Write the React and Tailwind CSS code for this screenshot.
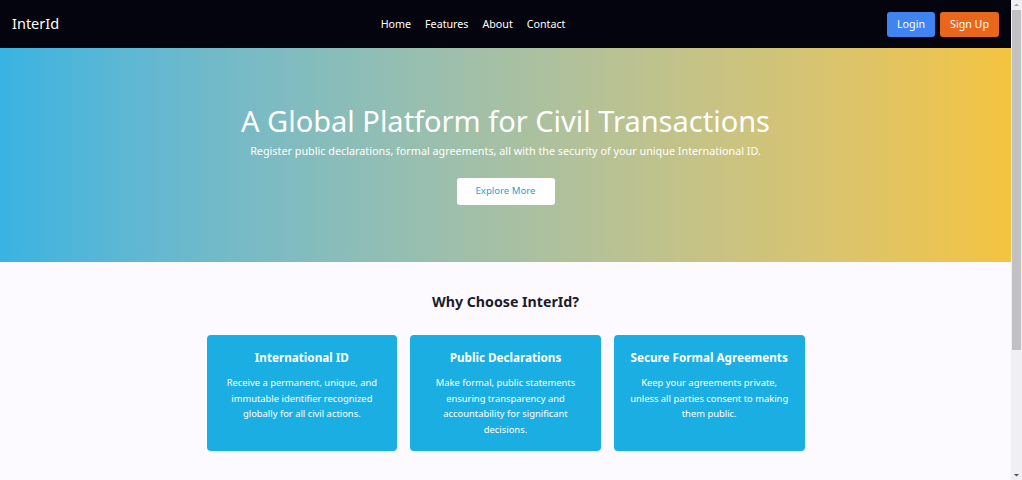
import React from "react";

const features = [
  {
    title: "International ID",
    text: "Receive a permanent, unique, and immutable identifier recognized globally for all civil actions.",
  },
  {
    title: "Public Declarations",
    text: "Make formal, public statements ensuring transparency and accountability for significant decisions.",
  },
  {
    title: "Secure Formal Agreements",
    text: "Keep your agreements private, unless all parties consent to making them public.",
  },
];

function Scrollbar() {
  return (
    <div className="w-[11px] h-[480px] shrink-0 bg-[#f0eff2] flex flex-col items-center">
      <svg width="7" height="10" viewBox="0 0 7 10" className="shrink-0">
        <path d="M1 6 L3.5 3.5 L6 6 Z" fill="#a3a3a3" />
      </svg>
      <div className="w-[9px] h-[340px] bg-[#c1c0c3]" />
      <div className="flex-1" />
      <svg width="7" height="10" viewBox="0 0 7 10" className="shrink-0">
        <path d="M1 4 L3.5 6.5 L6 4 Z" fill="#505050" />
      </svg>
    </div>
  );
}

export default function App() {
  return (
    <div className="flex h-[480px] overflow-hidden font-['Noto_Sans',sans-serif]">
      <div className="flex-1 min-w-0 bg-[#fcfaff]">
        <nav className="h-12 bg-[#04040f] px-3 flex items-center justify-between">
          <a href="#" className="text-white text-[14.5px]">InterId</a>
          <div className="flex items-center gap-[14px] text-white text-[10.7px]">
            <a href="#">Home</a>
            <a href="#">Features</a>
            <a href="#">About</a>
            <a href="#">Contact</a>
          </div>
          <div className="flex items-center gap-[5px] text-[10.7px] text-white">
            <button className="h-[25px] px-[10px] rounded-[3px] bg-[#4084f2]">Login</button>
            <button className="h-[25px] px-[10px] rounded-[3px] bg-[#e8671c]">Sign Up</button>
          </div>
        </nav>

        <section className="h-[214px] pt-[55px] bg-gradient-to-r from-[#38b3e2] to-[#f4c43e] flex flex-col items-center text-white text-center">
          <h1 className="text-[29px] leading-[36px]">A Global Platform for Civil Transactions</h1>
          <p className="text-[10.8px] leading-[16px] mt-[4px]">
            Register public declarations, formal agreements, all with the security of your unique International ID.
          </p>
          <button className="mt-[19px] w-[98px] h-[27px] bg-white rounded-[3px] text-[9.6px] text-[#22a5d9]">
            Explore More
          </button>
        </section>

        <section className="pt-[29px] flex flex-col items-center">
          <h2 className="text-[14.2px] leading-[22px] font-bold text-[#1b1b2b]">Why Choose InterId?</h2>
          <div className="mt-[22px] grid grid-cols-3 gap-[13px] w-[598px]">
            {features.map((f) => (
              <div key={f.title} className="h-[116px] rounded-[4px] bg-[#1baee3] text-white text-center px-[16px] pt-[13px]">
                <h3 className="text-[11.7px] leading-[18px] font-bold">{f.title}</h3>
                <p className="mt-[9px] text-[9.4px] leading-[15.7px]">{f.text}</p>
              </div>
            ))}
          </div>
        </section>
      </div>
      <Scrollbar />
    </div>
  );
}
